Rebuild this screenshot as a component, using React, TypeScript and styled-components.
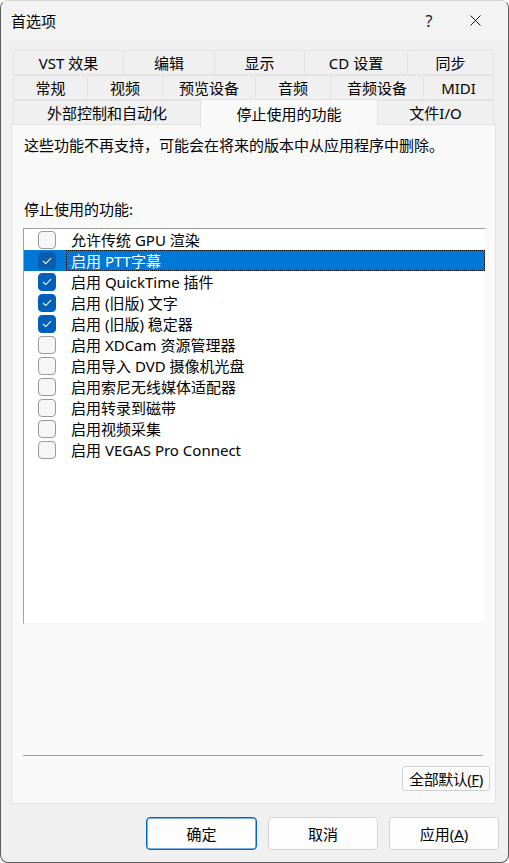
import React from "react";
import styled, { createGlobalStyle } from "styled-components";

const GlobalStyle = createGlobalStyle`
  html, body {
    margin: 0;
    padding: 0;
    background: #ffffff;
  }
  * {
    box-sizing: border-box;
  }
`;

const FONT = `"Noto Sans", "Noto Sans CJK SC", sans-serif`;

// Окно диалога
const Window = styled.div`
  display: flex;
  flex-direction: column;
  width: 509px;
  height: 863px;
  background: #f0f0f0;
  border: 1px solid #5c5c5c;
  border-top-color: #d4d4d4;
  border-radius: 8px;
  overflow: hidden;
  font-family: ${FONT};
  font-size: 15px;
  color: #000;
`;

const TitleBar = styled.div`
  display: flex;
  align-items: center;
  height: 39px;
  padding-left: 10px;
  background: #f3f3f3;
`;

const Title = styled.div`
  flex: 1;
  line-height: 20px;
`;

const TitleButton = styled.div`
  display: flex;
  align-items: center;
  justify-content: center;
  width: 46px;
  height: 39px;
  font-size: 16px;
  color: #1a1a1a;
`;

const Body = styled.div`
  display: flex;
  flex-direction: column;
  padding: 10px 12px 0 10px;
`;

// Ряды вкладок
const TabRows = styled.div`
  display: flex;
  flex-direction: column;
  margin: 0 2px;
`;

const TabRow = styled.div`
  display: flex;
  height: 25px;
`;

const Tab = styled.div<{ $w: number; $active?: boolean }>`
  display: flex;
  align-items: center;
  justify-content: center;
  width: ${(p) => p.$w}px;
  flex-shrink: 0;
  background: ${(p) => (p.$active ? "#f9f9f9" : "#f0f0f0")};
  border: 1px solid #e2e2e2;
  border-bottom: ${(p) => (p.$active ? "none" : "1px solid #e2e2e2")};
  border-right-width: 0;
  border-radius: 3px 3px 0 0;
  line-height: 20px;
  white-space: nowrap;
  position: ${(p) => (p.$active ? "relative" : "static")};
  z-index: ${(p) => (p.$active ? 2 : 0)};
  height: ${(p) => (p.$active ? "28px" : "25px")};
  margin-top: ${(p) => (p.$active ? "-1px" : "0")};
  &:last-child {
    border-right-width: 1px;
  }
`;

const Panel = styled.div`
  display: flex;
  flex-direction: column;
  height: 680px;
  background: #f9f9f9;
  border: 1px solid #e2e2e2;
  padding: 0 5px 0 12px;
  margin-top: -1px;
`;

const Description = styled.div`
  margin-top: 10px;
  line-height: 20px;
`;

const Label = styled.div`
  margin-top: 44px;
  line-height: 20px;
`;

const ListBox = styled.div`
  width: 463px;
  height: 396px;
  margin: 9px 0 0 -1px;
  background: #ffffff;
  border-top: 1px solid #a0a0a0;
  border-left: 1px solid #a0a0a0;
  border-right: 1px solid #f7f7f7;
  border-bottom: 1px solid #f7f7f7;
`;

const Item = styled.div<{ $selected?: boolean }>`
  display: flex;
  align-items: center;
  height: 21px;
  padding-left: 14px;
  background: ${(p) => (p.$selected ? "#0078d7" : "transparent")};
  color: ${(p) => (p.$selected ? "#ffffff" : "#000000")};
`;

const Box = styled.div<{ $checked: boolean; $selected?: boolean }>`
  display: flex;
  align-items: center;
  justify-content: center;
  width: 18px;
  height: 18px;
  flex-shrink: 0;
  border-radius: 4px;
  background: ${(p) =>
    p.$checked ? (p.$selected ? "#0a5cad" : "#005fb8") : "#f6f6f6"};
  border: 1px solid
    ${(p) => (p.$checked ? (p.$selected ? "#0a5cad" : "#005fb8") : "#9a9a9a")};
`;

const ItemText = styled.div<{ $focus?: boolean }>`
  flex: 1;
  height: 21px;
  margin-left: 10px;
  padding-left: 4px;
  line-height: 20px;
  white-space: nowrap;
  border: 1px dotted ${(p) => (p.$focus ? "#000" : "transparent")};
`;

const Separator = styled.div`
  width: 460px;
  height: 1px;
  margin: 131px 0 0 -1px;
  background: #a0a0a0;
`;

const DefaultRow = styled.div`
  display: flex;
  justify-content: flex-end;
  margin-top: 10px;
`;

const DefaultButton = styled.div`
  display: flex;
  align-items: center;
  justify-content: center;
  width: 88px;
  height: 25px;
  background: #fdfdfd;
  border: 1px solid #d0d0d0;
  border-radius: 3px;
  line-height: 20px;
  white-space: nowrap;
  letter-spacing: -0.5px;
`;

const Footer = styled.div`
  display: flex;
  justify-content: flex-end;
  gap: 11px;
  padding: 13px 9px 0 0;
`;

const Button = styled.div<{ $primary?: boolean }>`
  display: flex;
  align-items: center;
  justify-content: center;
  width: ${(p) => (p.$primary ? "111px" : "110px")};
  height: 33px;
  background: #fdfdfd;
  border: 1px solid ${(p) => (p.$primary ? "#0067c0" : "#d3d3d3")};
  box-shadow: ${(p) => (p.$primary ? "inset 0 0 0 0.5px #0067c0" : "none")};
  border-radius: 4px;
  line-height: 20px;
`;

const tabRows = [
  [
    { t: "VST 效果", w: 110 },
    { t: "编辑", w: 91 },
    { t: "显示", w: 90 },
    { t: "CD 设置", w: 103 },
    { t: "同步", w: 87 },
  ],
  [
    { t: "常规", w: 74 },
    { t: "视频", w: 75 },
    { t: "预览设备", w: 93 },
    { t: "音频", w: 75 },
    { t: "音频设备", w: 93 },
    { t: "MIDI", w: 71 },
  ],
  [
    { t: "外部控制和自动化", w: 187 },
    { t: "停止使用的功能", w: 177, active: true },
    { t: "文件I/O", w: 117 },
  ],
];

const features = [
  { t: "允许传统 GPU 渲染", c: false },
  { t: "启用 PTT字幕", c: true, sel: true },
  { t: "启用 QuickTime 插件", c: true },
  { t: "启用 (旧版) 文字", c: true },
  { t: "启用 (旧版) 稳定器", c: true },
  { t: "启用 XDCam 资源管理器", c: false },
  { t: "启用导入 DVD 摄像机光盘", c: false },
  { t: "启用索尼无线媒体适配器", c: false },
  { t: "启用转录到磁带", c: false },
  { t: "启用视频采集", c: false },
  { t: "启用 VEGAS Pro Connect", c: false },
];

const Check = () => (
  <svg width="10" height="8" viewBox="0 0 10 8">
    <polyline
      points="1,4 3.8,6.6 9,1.2"
      fill="none"
      stroke="#ffffff"
      strokeWidth="1.1"
    />
  </svg>
);

const CloseIcon = () => (
  <svg width="11" height="11" viewBox="0 0 11 11">
    <path d="M0.5 0.5 L10.5 10.5 M10.5 0.5 L0.5 10.5" stroke="#1a1a1a" strokeWidth="1" />
  </svg>
);

export default function App() {
  return (
    <>
      <GlobalStyle />
      <Window>
        <TitleBar>
          <Title>首选项</Title>
          <TitleButton>?</TitleButton>
          <TitleButton style={{ marginRight: 10 }}>
            <CloseIcon />
          </TitleButton>
        </TitleBar>
        <Body>
          <TabRows>
            {tabRows.map((row, i) => (
              <TabRow key={i}>
                {row.map((tab) => (
                  <Tab key={tab.t} $w={tab.w} $active={"active" in tab}>
                    {tab.t}
                  </Tab>
                ))}
              </TabRow>
            ))}
          </TabRows>
          <Panel>
            <Description>
              这些功能不再支持，可能会在将来的版本中从应用程序中删除。
            </Description>
            <Label>停止使用的功能:</Label>
            <ListBox>
              {features.map((f) => (
                <Item key={f.t} $selected={f.sel}>
                  <Box $checked={f.c} $selected={f.sel}>
                    {f.c && <Check />}
                  </Box>
                  <ItemText $focus={f.sel}>{f.t}</ItemText>
                </Item>
              ))}
            </ListBox>
            <Separator />
            <DefaultRow>
              <DefaultButton>
                全部默认(<u>F</u>)
              </DefaultButton>
            </DefaultRow>
          </Panel>
        </Body>
        <Footer>
          <Button $primary>确定</Button>
          <Button>取消</Button>
          <Button>
            应用(<u>A</u>)
          </Button>
        </Footer>
      </Window>
    </>
  );
}
